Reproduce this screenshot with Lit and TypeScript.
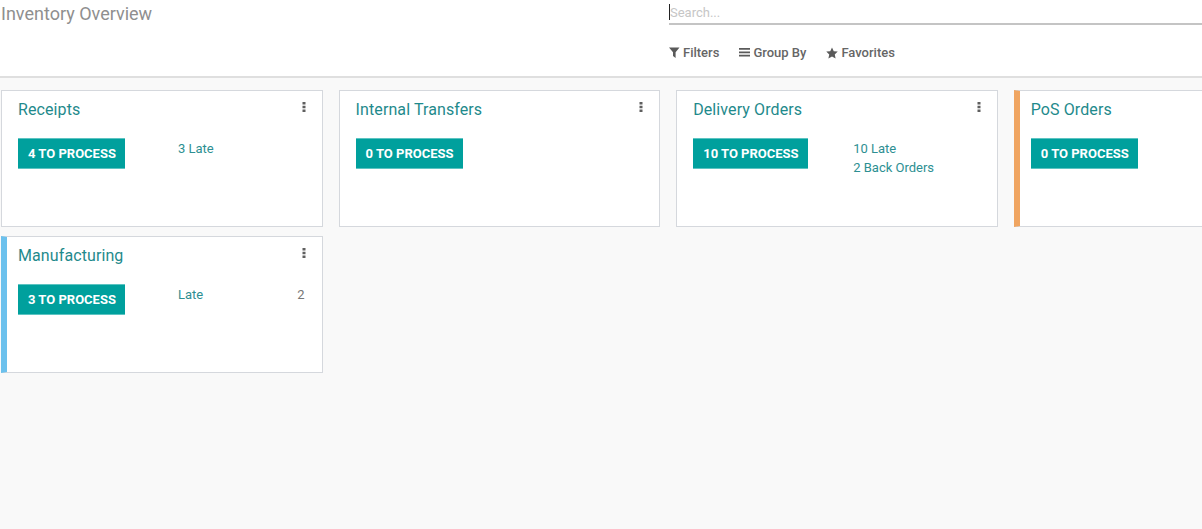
import { LitElement, html, css, svg } from "lit";
import { customElement } from "lit/decorators.js";

type Card = { name: string; count: number; stats?: { label: string; value?: string }[]; accent?: string };

const cards: Card[] = [
  { name: "Receipts", count: 4, stats: [{ label: "3 Late" }] },
  { name: "Internal Transfers", count: 0 },
  { name: "Delivery Orders", count: 10, stats: [{ label: "10 Late" }, { label: "2 Back Orders" }] },
  { name: "PoS Orders", count: 0, accent: "orange" },
  { name: "Manufacturing", count: 3, stats: [{ label: "Late", value: "2" }], accent: "blue" },
];

const filterIcon = svg`<svg class="ico" width="11" height="11" viewBox="0 0 11 11"><path d="M0 .5h10.5L6.6 5.2V11L4 9V5.2z" fill="currentColor"/></svg>`;
const barsIcon = svg`<svg class="ico" width="11" height="11" viewBox="0 0 11 11"><path d="M0 1h11v1.8H0zM0 4.4h11v1.8H0zM0 7.8h11v1.8H0z" fill="currentColor"/></svg>`;
const starIcon = svg`<svg class="ico" width="12" height="12" viewBox="0 0 13 12"><path d="M6.5 0l1.9 4 4.3.5-3.2 3 .9 4.4-3.9-2.2-3.9 2.2.9-4.4L.3 4.5 4.6 4z" fill="currentColor"/></svg>`;

@customElement("app-root")
export class AppRoot extends LitElement {
  static styles = css`
    :host {
      display: block;
      width: 100%;
      height: 529px;
      overflow: hidden;
      background: #f9f9f9;
      font-family: Roboto, "Noto Sans", sans-serif;
      font-size: 13px;
      color: #4c4c4c;
    }
    .head {
      box-sizing: border-box;
      height: 78px;
      background: #fff;
      border-bottom: 2px solid #dfdfdf;
      display: grid;
      grid-template-columns: 669px 1fr;
    }
    .title {
      font-size: 18px;
      line-height: 20px;
      padding: 4px 0 0 1px;
      color: #8f8f8f;
    }
    .search {
      box-sizing: border-box;
      height: 25px;
      border-bottom: 2px solid #c4c4c4;
      padding: 4px 0 0 0;
      line-height: 17px;
      font-size: 13px;
      color: #c6c6c6;
      display: flex;
    }
    .caret {
      width: 1px;
      height: 16px;
      background: #222;
    }
    .tools {
      display: flex;
      gap: 20px;
      padding-top: 19px;
      line-height: 17px;
      font-weight: 500;
      color: #666;
    }
    .tool {
      display: flex;
      align-items: center;
      gap: 3px;
    }
    .ico {
      display: block;
      color: #5a5a5a;
    }
    .grid {
      display: grid;
      grid-template-columns: repeat(4, 321.6px);
      column-gap: 16px;
      row-gap: 9px;
      padding: 12px 0 0 1px;
    }
    .card {
      box-sizing: border-box;
      height: 137px;
      background: #fff;
      border: 1px solid #d5d8dd;
      padding: 8px 16px 0;
    }
    .card.orange,
    .card.blue {
      border-left-width: 6px;
      padding-left: 11px;
    }
    .card.orange { border-left-color: #f0a561; }
    .card.blue { border-left-color: #6cc1ed; }
    .top {
      display: flex;
      justify-content: space-between;
      align-items: flex-start;
    }
    .name {
      font-size: 16px;
      letter-spacing: 0.1px;
      line-height: 22px;
      color: #1f8a8c;
    }
    .dots {
      margin: 2px 0 0;
      color: #5f5f5f;
    }
    .body {
      display: grid;
      grid-template-columns: 160px 1fr;
      margin-top: 17px;
    }
    .btn {
      justify-self: start;
      box-sizing: border-box;
      height: 31px;
      padding: 0 9px 0 10px;
      background: #00a09d;
      border-top: 1px solid #5cc4c2;
      border-bottom: 1px solid #5cc4c2;
      color: #fff;
      font-size: 13px;
      font-weight: 700;
      line-height: 30px;
      white-space: nowrap;
    }
    .stats {
      line-height: 19px;
      padding-top: 1px;
      color: #2d8f92;
    }
    .stat {
      display: flex;
      justify-content: space-between;
      padding-right: 1px;
    }
    .val { color: #777; }
  `;

  render() {
    return html`
      <div class="head">
        <div class="title">Inventory Overview</div>
        <div>
          <div class="search"><span class="caret"></span>Search...</div>
          <div class="tools">
            <span class="tool">${filterIcon}Filters</span>
            <span class="tool">${barsIcon}Group By</span>
            <span class="tool">${starIcon}Favorites</span>
          </div>
        </div>
      </div>
      <div class="grid">
        ${cards.map(
          (c) => html`
            <div class="card ${c.accent ?? ""}">
              <div class="top">
                <div class="name">${c.name}</div>
                <svg class="dots" width="4" height="12" viewBox="0 0 4 12">
                  <path d="M.5 1h3v2.4h-3zM.5 4.8h3v2.4h-3zM.5 8.6h3V11h-3z" fill="currentColor"/>
                </svg>
              </div>
              <div class="body">
                <div class="btn">${c.count} TO PROCESS</div>
                <div class="stats">
                  ${(c.stats ?? []).map(
                    (s) => html`<div class="stat"><span>${s.label}</span>${s.value ? html`<span class="val">${s.value}</span>` : ""}</div>`
                  )}
                </div>
              </div>
            </div>
          `
        )}
      </div>
    `;
  }
}
